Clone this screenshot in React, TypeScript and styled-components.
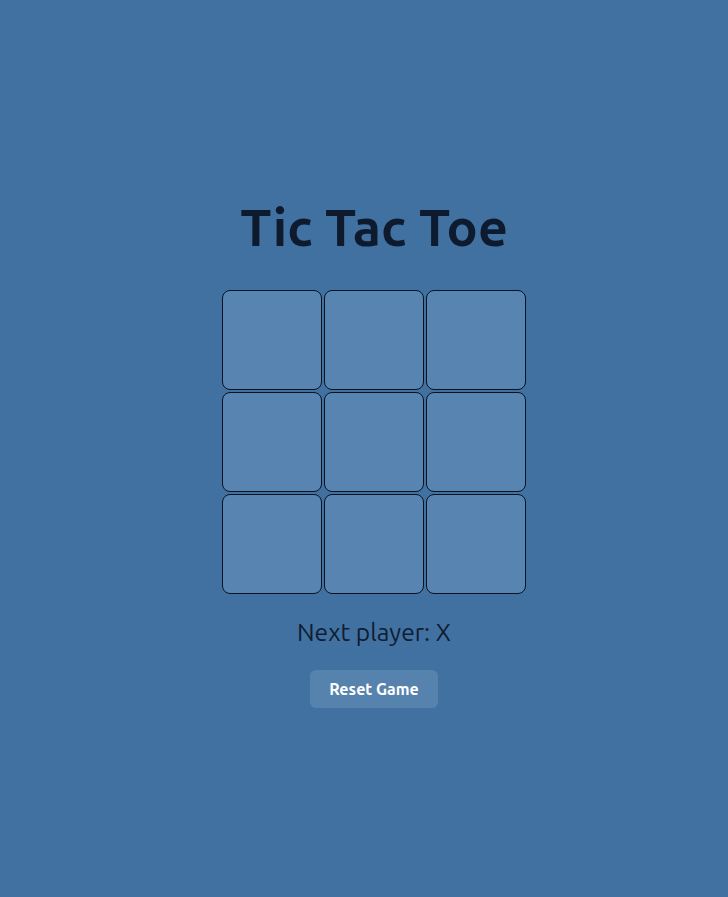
import React, { useState } from 'react';
import styled, { createGlobalStyle } from 'styled-components';

const GlobalStyle = createGlobalStyle`
  html, body {
    margin: 0;
    padding: 0;
    background: #4171a0;
  }
  body {
    font-family: "Ubuntu", "Noto Sans", "Open Sans", sans-serif;
  }
`;

type Cell = 'X' | 'O' | null;

const App = () => {
  const [cells, setCells] = useState<Cell[]>(Array(9).fill(null));
  const [xNext, setXNext] = useState(true);

  const play = (i: number) => {
    if (cells[i]) return;
    const next = cells.slice();
    next[i] = xNext ? 'X' : 'O';
    setCells(next);
    setXNext(!xNext);
  };

  const reset = () => {
    setCells(Array(9).fill(null));
    setXNext(true);
  };

  return (
    <Page>
      <GlobalStyle />
      <Title>Tic Tac Toe</Title>
      <Board>
        {cells.map((c, i) => (
          <Square key={i} onClick={() => play(i)}>{c}</Square>
        ))}
      </Board>
      <Status>Next player: {xNext ? 'X' : 'O'}</Status>
      <ResetButton onClick={reset}>Reset Game</ResetButton>
    </Page>
  );
};

export default App;

const Page = styled.div`
  min-height: 100vh;
  display: flex;
  flex-direction: column;
  align-items: center;
  justify-content: center;
  padding-left: 20px;
  box-sizing: border-box;
`;

const Title = styled.h1`
  margin: 0 0 26px;
  font-size: 52px;
  font-weight: 700;
  color: #0e1b2f;
  line-height: 74px;
`;

const Board = styled.div`
  display: grid;
  grid-template-columns: repeat(3, 100px);
  grid-template-rows: repeat(3, 100px);
  gap: 2px;
`;

const Square = styled.button`
  box-sizing: border-box;
  width: 100px;
  height: 100px;
  background: #5784b0;
  border: 1px solid #0a1320;
  border-radius: 8px;
  font-family: inherit;
  font-size: 48px;
  font-weight: 700;
  color: #0f1d33;
  cursor: pointer;
  padding: 0;
`;

const Status = styled.div`
  margin-top: 22px;
  font-size: 24.6px;
  color: #0f1d33;
  line-height: 32px;
`;

const ResetButton = styled.button`
  margin-top: 22px;
  width: 128px;
  height: 38px;
  background: #5683ae;
  border: none;
  border-radius: 6px;
  color: #fff;
  font-family: inherit;
  font-size: 16px;
  font-weight: 600;
  cursor: pointer;
`;
